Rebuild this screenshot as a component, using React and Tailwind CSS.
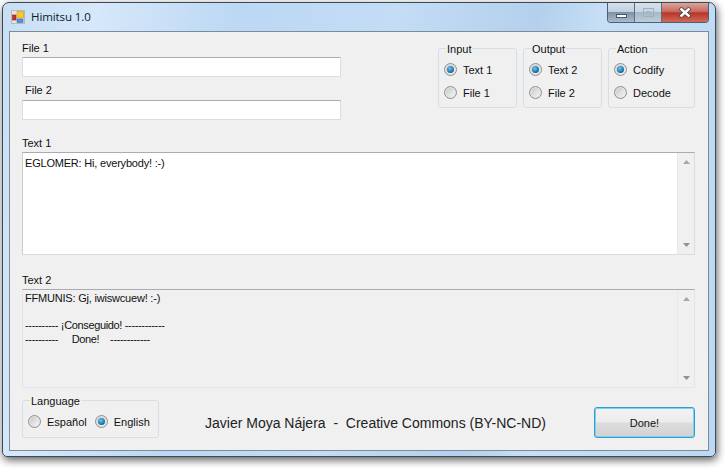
import React from 'react';

const ui = "font-['Liberation_Sans',Arial,sans-serif] text-[11px] leading-[14px] text-[#111]";

const Radio = ({ checked, label, className = '' }) => (
  <div className={`flex items-center h-[13px] ${className}`}>
    <span className="flex items-center justify-center w-[13px] h-[13px] rounded-full border border-[#8f8f8f] shadow-[inset_0_0_0_1px_#e4e4e4] bg-gradient-to-br from-[#c4c4c4] to-[#fbfbfb]">
      {checked && (
        <span className="w-[7px] h-[7px] rounded-full bg-[radial-gradient(circle_at_40%_35%,#6fc3ef,#0f6aa0_70%)]" />
      )}
    </span>
    <span className="ml-[6px] whitespace-nowrap">{label}</span>
  </div>
);

const Group = ({ title, className = '', children }) => (
  <div className={`relative border border-[#d5dfe5] rounded-[3px] ${className}`}>
    <span className="absolute -top-[7px] left-[7px] bg-[#f0f0f0] px-[1px]">{title}</span>
    {children}
  </div>
);

const ScrollBar = () => (
  <div className="w-[17px] h-full ml-auto bg-[#f0f0f0] border-l border-[#e9e9e9] flex flex-col items-center justify-between py-[7px]">
    <svg width="7" height="4" viewBox="0 0 7 4"><path d="M3.5 0 7 4H0z" fill="#a3a8ad" /></svg>
    <svg width="7" height="4" viewBox="0 0 7 4"><path d="M0 0h7L3.5 4z" fill="#8d9297" /></svg>
  </div>
);

const AppIcon = () => (
  <svg width="14" height="14" viewBox="0 0 14 14" className="ml-[8px]">
    <rect x="0.5" y="0.5" width="13" height="13" fill="#e4e4e4" stroke="#b9b9b9" />
    <rect x="1.5" y="5" width="3.5" height="5" fill="#c9302a" stroke="#8a2a20" strokeWidth="0.6" />
    <rect x="6" y="1.5" width="6.5" height="6.5" fill="#f8c830" stroke="#c99a20" strokeWidth="0.6" />
    <rect x="6" y="9" width="6" height="3.5" fill="#5a8fdc" stroke="#3d6cb0" strokeWidth="0.6" />
  </svg>
);

export default function App() {
  return (
    <div className={`w-[725px] h-[468px] bg-white overflow-hidden pt-[2px] pl-[2px] ${ui}`}>
      {/* Window frame */}
      <div className="w-[714px] h-[455px] flex flex-col rounded-t-[7px] rounded-b-[5px] border border-[#3c4a55] shadow-[1px_3px_9px_rgba(0,0,0,0.65)] bg-[linear-gradient(100deg,#c7def5_0%,#d6e8fa_12%,#bcd8f4_30%,#c4dcf6_50%,#b4d0ec_68%,#c6dff6_76%,#bcd8f4_100%)]">
        {/* Title bar */}
        <div className="h-[28px] shrink-0 flex items-center relative">
          <AppIcon />
          <span className="ml-[6px] font-['Open_Sans',sans-serif] text-[11.5px] tracking-[-0.1px] text-[#0b1a2a]">Himitsu 1.0</span>
          <div className="ml-auto mr-[6px] self-start flex h-[20px] border border-t-0 border-[#4f5f6e] rounded-b-[4px] overflow-hidden">
            <div className="w-[27px] flex items-end justify-center pb-[4px] border-r border-[#5d6d7a] bg-[linear-gradient(#d4e0ec_0%,#c2d0de_45%,#7e93a8_50%,#a8bccd_100%)]">
              <span className="w-[11px] h-[4px] bg-white border border-[#4a5866]" />
            </div>
            <div className="w-[27px] flex items-center justify-center border-r border-[#5d6d7a] bg-[linear-gradient(#d4e0ec_0%,#c8d6e3_45%,#a6b8c8_50%,#bccddb_100%)]">
              <span className="w-[11px] h-[9px] border border-[#9fb0be] flex items-center justify-center">
                <span className="w-[5px] h-[3px] border border-[#a9b8c5]" />
              </span>
            </div>
            <div className="w-[46px] flex items-center justify-center bg-[linear-gradient(#d9a69e_0%,#c9695d_45%,#b8352a_52%,#d06a58_100%)]">
              <svg width="14" height="11" viewBox="0 0 14 11">
                <path d="M2 1 12 10M12 1 2 10" stroke="#3f3f44" strokeWidth="4" />
                <path d="M2.5 1.5 11.5 9.5M11.5 1.5 2.5 9.5" stroke="#fff" strokeWidth="2.4" />
              </svg>
            </div>
          </div>
        </div>

        {/* Client area */}
        <div className="ml-[6px] w-[700px] h-[420px] border border-[#7d8b98] bg-[#f0f0f0] pl-[12px] pr-[13px] pt-[9px]">
          <div className="flex">
            <div className="w-[319px]">
              <div className="h-[13px]">File 1</div>
              <div className="mt-[3px] h-[20px] bg-white border border-[#d6dfe5] border-t-[#a9adb2]" />
              <div className="mt-[6px] h-[14px] pl-[3px]">File 2</div>
              <div className="mt-[3px] h-[20px] bg-white border border-[#d6dfe5] border-t-[#a9adb2]" />
            </div>
            <div className="ml-auto flex gap-[6px] pt-[7px] h-[67px]">
              <Group title="Input" className="w-[79px] pl-[5px] pt-[14px]">
                <Radio checked label="Text 1" />
                <Radio label="File 1" className="mt-[10px]" />
              </Group>
              <Group title="Output" className="w-[79px] pl-[5px] pt-[14px]">
                <Radio checked label="Text 2" />
                <Radio label="File 2" className="mt-[10px]" />
              </Group>
              <Group title="Action" className="w-[87px] pl-[5px] pt-[14px]">
                <Radio checked label="Codify" />
                <Radio label="Decode" className="mt-[10px]" />
              </Group>
            </div>
          </div>

          <div className="mt-[16px] h-[14px]">Text 1</div>
          <div className="mt-[2px] h-[103px] flex bg-white border border-[#d6dfe5] border-t-[#a9adb2] border-l-[#c8ced3]">
            <div className="pl-[2px] pt-[3px] whitespace-pre tracking-[-0.2px]">EGLOMER: Hi, everybody! :-)</div>
            <ScrollBar />
          </div>

          <div className="mt-[18px] h-[14px]">Text 2</div>
          <div className="mt-[2px] h-[99px] flex border border-[#dfe5e9] border-t-[#a9adb2]">
            <div className="pl-[2px] pt-[2px] leading-[13.5px] whitespace-pre tracking-[-0.2px]">
              {'FFMUNIS: Gj, iwiswcuew! :-)\n\n'}
              <span className="tracking-[-0.35px]">{'---------- ¡Conseguido! ------------\n----------     Done!    ------------'}</span>
            </div>
            <ScrollBar />
          </div>

          <div className="mt-[12px] flex items-start">
            <Group title="Language" className="w-[137px] h-[38px] pl-[5px] pt-[14px]">
              <div className="flex">
                <Radio label="Español" />
                <Radio checked label="English" className="ml-[8px]" />
              </div>
            </Group>
            <div className="ml-[46px] mt-[15px] text-[14px] leading-[16px] whitespace-pre text-[#222]">Javier Moya Nájera  -  Creative Commons (BY-NC-ND)</div>
            <button className="ml-auto mt-[7px] w-[101px] h-[31px] rounded-[3px] border border-[#2f9fd0] text-[#111] shadow-[inset_0_0_0_1px_#7fd0ee] bg-[linear-gradient(#f3f3f3_0%,#ececec_48%,#dcdcdc_52%,#d2d2d2_100%)]">Done!</button>
          </div>
        </div>
      </div>
    </div>
  );
}
